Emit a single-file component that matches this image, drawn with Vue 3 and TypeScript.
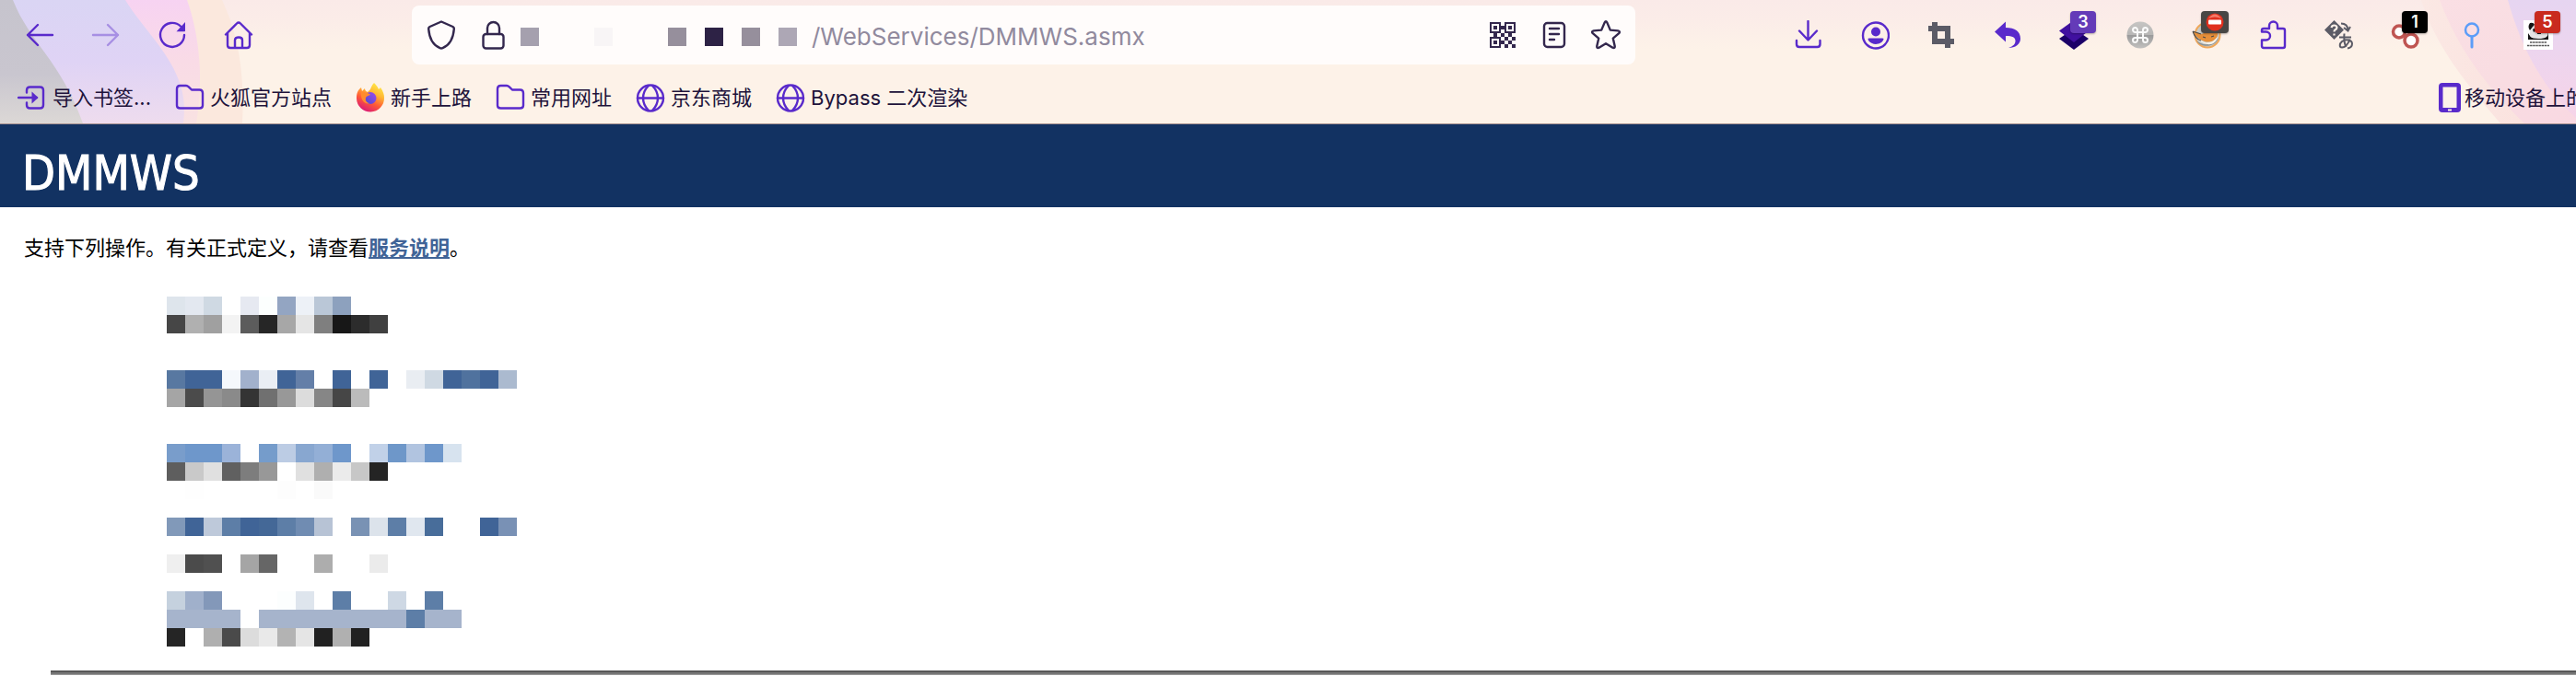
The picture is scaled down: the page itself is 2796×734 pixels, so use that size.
<script setup lang="ts">
import { ref } from 'vue'

type Row = string[]

const address = ref('/WebServices/DMMWS.asmx')

const addressCells: Row = [
  '#a5a0ae', '', '', '', '#f8f5f6', '', '', '', '#968f9c', '', '#2d2245', '', '#968f9c', '', '#ada7b5',
]

interface Bookmark {
  label: string
  icon: 'import' | 'folder' | 'firefox' | 'globe'
}

const bookmarks: Bookmark[] = [
  { label: '导入书签...', icon: 'import' },
  { label: '火狐官方站点', icon: 'folder' },
  { label: '新手上路', icon: 'firefox' },
  { label: '常用网址', icon: 'folder' },
  { label: '京东商城', icon: 'globe' },
  { label: 'Bypass 二次渲染', icon: 'globe' },
]

const A = '#a6b4cc'

/* Colour cells for each obscured operation entry, one array per line. */
const operations: Row[][] = [
  [
    ['#dee5ec', '#e3e8f0', '#cfd9e3', '', '#e6e9f1', '#fcfffe', '#93a5c2', '#edf1f7', '#bac7d7', '#8da1be'],
    ['#464646', '#b0b0b0', '#a0a0a0', '#f3f3f3', '#5c5c5c', '#262626', '#a7a7a7', '#e5e5e5', '#7f7f7f', '#171717', '#2c2c2c', '#404040'],
    [],
    [],
  ],
  [
    ['#5878a1', '#406497', '#406497', '#f5f8fc', '#a2b1cc', '#eaeef4', '#406497', '#647fa8', '', '#406497', '', '#406497', '', '#e9edf2', '#cfd9e3', '#406497', '#50729e', '#406497', '#abbacf'],
    ['#a5a5a5', '#4b4b4b', '#959595', '#8a8a8a', '#343434', '#707070', '#989898', '#dcdcdc', '#868686', '#464646', '#bbbbbb'],
    [],
    [],
  ],
  [
    ['#799dcb', '#6e97cb', '#6e97cb', '#9bb3d9', '', '#759ccb', '#bccce4', '#88a7d0', '#93afd6', '#6e97cb', '', '#c1d1e8', '#6e97c9', '#b1c4e0', '#6e97cb', '#d7e3ef'],
    ['#5e5e5e', '#c9c9c9', '#e0e0e0', '#606060', '#7d7d7d', '#989898', '', '#e0e0e0', '#afafaf', '#ebebeb', '#c7c7c7', '#242424'],
    ['', '#fefefe', '', '', '', '', '#fdfdfd', '', '#fafafa'],
    [],
  ],
  [
    ['#8199b9', '#406497', '#bec9da', '#5d7ea7', '#406497', '#446897', '#5d7ea7', '#708cb2', '#b7c3d5', '', '#7992b4', '#dce3eb', '#5d7ea7', '#e0e7ef', '#486d9a', '', '', '#406497', '#7991b5'],
    [],
    ['#efefef', '#4b4b4b', '#505050', '', '#a5a5a5', '#666666', '', '', '#adadad', '', '', '#ebebeb'],
    [],
  ],
  [
    ['#c5d1de', '#a0b0cb', '#8398b9', '', '', '', '#fcfefe', '#dee5ed', '', '#5d7ea7', '', '', '#ced8e4', '', '#5d7ea7'],
    [A, A, A, A, '', A, A, A, A, A, A, A, A, '#5d7ea7', A, A],
    ['#252525', '', '#afafaf', '#4a4a4a', '#dcdcdc', '#e9e9e9', '#b3b3b3', '#e5e5e5', '#212121', '#b0b0b0', '#212121'],
  ],
]

const qrDark: string[] = [
  'XXXXXX..XXXXXX',
  'X....X..X....X',
  'X.XX.XXXX.XX.X',
  'X.XX.XXXX.XX.X',
  'X....X..X....X',
  'XXXXXX..XXXXXX',
  '..XX..XX..XX..',
  '..XX..XX..XX..',
  'XXXXXX..XX..XX',
  'X....X..XX..XX',
  'X.XX.XXX..XX..',
  'X.XX.XXX..XX..',
  'X....X..XX..XX',
  'XXXXXX..XX..XX',
]
const qrPath = qrDark
  .flatMap((line, y) => [...line].map((c, x) => (c === 'X' ? `M${2 + x * 2} ${2 + y * 2}h2v2h-2z` : '')))
  .join('')
</script>

<template>
  <div class="window">
    <header class="chrome">
      <svg class="swoosh left" viewBox="0 0 300 134" aria-hidden="true">
        <defs>
          <linearGradient id="lav" x1="0" y1="0" x2="0" y2="1">
            <stop offset="0" stop-color="#dad5f4" /><stop offset=".5" stop-color="#dfd3f5" /><stop offset="1" stop-color="#eedcee" />
          </linearGradient>
          <linearGradient id="pink" x1="0" y1="0" x2="0" y2="1">
            <stop offset="0" stop-color="#f7d3f2" /><stop offset=".5" stop-color="#f9dbe6" /><stop offset="1" stop-color="#f9e2e2" />
          </linearGradient>
          <linearGradient id="grey" x1="0" y1="0" x2="0" y2="1">
            <stop offset="0" stop-color="#c6c4cd" /><stop offset=".6" stop-color="#c9c6cf" /><stop offset="1" stop-color="#dcd8d6" />
          </linearGradient>
        </defs>
        <path fill="#fbe8dd" d="M0 0H241C256 32 266 72 263 134H0z" />
        <path fill="url(#pink)" d="M0 0H203C217 40 221 88 213 134H0z" />
        <path fill="url(#lav)" d="M0 0H136C162 42 208 76 199 134H0z" />
        <path fill="url(#grey)" d="M0 0H14C32 46 66 66 90 134H0z" />
      </svg>
      <svg class="swoosh right" viewBox="0 0 206 134" aria-hidden="true">
        <defs>
          <linearGradient id="ro" x1="0" y1="0" x2="1" y2="0">
            <stop offset="0" stop-color="#fbe8e4" /><stop offset="1" stop-color="#fae0dc" />
          </linearGradient>
          <linearGradient id="rp" x1="0" y1="0" x2="1" y2="1">
            <stop offset="0" stop-color="#fadfe4" /><stop offset=".5" stop-color="#f9dde2" /><stop offset="1" stop-color="#f9d8e2" />
          </linearGradient>
          <linearGradient id="rl" x1="0" y1="0" x2="0" y2="1">
            <stop offset="0" stop-color="#e6d5f1" /><stop offset=".45" stop-color="#edd5ee" /><stop offset="1" stop-color="#f6d4e8" />
          </linearGradient>
        </defs>
        <path fill="url(#ro)" d="M38 0C55 54 90 94 124 134H206V0z" />
        <path fill="url(#rp)" d="M58 0C78 54 112 98 150 134H206V0z" />
        <path fill="url(#rl)" d="M132 0C145 46 166 92 206 128V0z" />
      </svg>

      <div class="nav">
        <button class="tool" type="button" aria-label="后退">
          <svg viewBox="0 0 32 32"><path class="line" d="M30 16H3M14 5L3 16l11 11" /></svg>
        </button>
        <button class="tool dim" type="button" aria-label="前进">
          <svg viewBox="0 0 32 32"><path class="line" d="M2 16h27M18 5l11 11-11 11" /></svg>
        </button>
        <button class="tool" type="button" aria-label="刷新">
          <svg viewBox="0 0 32 32"><path class="line" d="M29 16A13 13 0 1 1 25 6.500" /><path fill="currentColor" d="M30 2v9.500a.8.8 0 0 1-.8.8H20.500z" /></svg>
        </button>
        <button class="tool" type="button" aria-label="主页">
          <svg viewBox="0 0 32 32"><path class="line" d="M2 15.500L14 3.500q2-2 4 0l12 12M4 14v13q0 3 3 3h18q3 0 3-3V14M12 30v-8.500q0-3 4-3t4 3V30" /></svg>
        </button>

        <div class="field">
          <button class="tool mini" type="button" aria-label="跟踪保护">
            <svg viewBox="0 0 32 32"><path class="line" d="M16 1.500L28.500 7q1.500.8 1.300 2.500C29 20 25 27 17.500 30.200q-1.500.7-3 0C7 27 3 20 2.200 9.500Q2 7.800 3.500 7z" /></svg>
          </button>
          <button class="tool mini" type="button" aria-label="网站信息">
            <svg viewBox="0 0 32 32"><rect class="line" x="5.500" y="15" width="22" height="15.500" rx="3" /><path class="line" d="M10 15V8.500a6.500 6.500 0 0 1 13 0V15" /></svg>
          </button>
          <div class="cells address-cells" aria-hidden="true">
            <i v-for="(c, i) in addressCells" :key="i" :style="{ background: c || 'transparent' }"></i>
          </div>
          <input v-model="address" class="address" type="text" aria-label="地址" spellcheck="false" />
          <button class="tool mini" type="button" aria-label="二维码">
            <svg viewBox="0 0 32 32"><path fill="currentColor" shape-rendering="crispEdges" :d="qrPath" /></svg>
          </button>
          <button class="tool mini" type="button" aria-label="阅读模式">
            <svg viewBox="0 0 32 32"><rect class="line" x="5" y="3" width="22" height="26" rx="3.500" /><path class="line" d="M11 9h10M11 15h10M11 21h5" /></svg>
          </button>
          <button class="tool mini" type="button" aria-label="收藏">
            <svg viewBox="0 0 32 32"><path class="line" d="M14.600 2.600q1.400-2.600 2.800 0l3.400 8 8.400.8q2.900.6 1 2.700l-6.400 5.600 1.900 8.300q.3 2.900-2.300 1.700L16 25.200l-7.400 4.500q-2.600 1.200-2.300-1.700l1.900-8.300-6.400-5.600q-1.900-2.100 1-2.700l8.400-.8z" /></svg>
          </button>
        </div>

        <button class="tool" type="button" aria-label="下载">
          <svg viewBox="0 0 32 32"><path class="line" d="M15.500 1v20M6 11.500l9.500 10 9.500-10M3 22v4q0 3 3 3h19.500q3 0 3-3v-4" /></svg>
        </button>
        <button class="tool" type="button" aria-label="账户">
          <svg viewBox="0 0 32 32"><circle class="line" cx="17" cy="16.500" r="14" /><circle cx="17" cy="12.500" r="5" fill="currentColor" /><path fill="currentColor" d="M10 19.500h14q2 0 1.400 1.600C23 27.500 11 27.500 8.600 21.100Q8 19.500 10 19.500z" /></svg>
        </button>
        <button class="tool slate" type="button" aria-label="截图">
          <svg viewBox="0 0 32 32"><path fill="currentColor" fill-rule="evenodd" d="M6 2h6v4h14v14h4v6h-4v4h-6v-4H6V12H2V6h4zM12 12v8h8v-8z" /></svg>
        </button>
        <button class="tool" type="button" aria-label="撤销">
          <svg viewBox="0 0 32 32"><path fill="currentColor" d="M2 12.500L14 1.500V8C24 8 30 12 30 20c0 6-5.500 10-13 10 5.500-2 7.500-4.500 7.500-7.500 0-4-3-5.500-10.500-5.500v6.500z" /></svg>
        </button>
        <button class="tool" type="button" aria-label="图层，3">
          <svg viewBox="0 0 32 32"><path fill="#1b0068" d="M0 20L16 9l16 11-16 12z" /><path fill="#4010a0" d="M0 11.500L16 0l16 11.500L16 24z" /></svg>
          <span class="badge violet">3</span>
        </button>
        <button class="tool" type="button" aria-label="快捷命令">
          <svg viewBox="0 0 32 32">
            <defs><linearGradient id="cmd" x1="0" y1="0" x2="0" y2="1"><stop offset="0" stop-color="#c6c5c3" /><stop offset=".49" stop-color="#b8b7b6" /><stop offset=".5" stop-color="#9a9a9a" /><stop offset="1" stop-color="#c2c1bf" /></linearGradient></defs>
            <circle cx="16" cy="16" r="14.500" fill="url(#cmd)" />
            <path fill="none" stroke="#fafafa" stroke-width="2" d="M13 13h6v6H13zM13 13h-2.500a2.500 2.500 0 1 1 2.500-2.500zM19 13v-2.500a2.500 2.500 0 1 1 2.500 2.500zM19 19h2.500a2.500 2.500 0 1 1-2.500 2.500zM13 19v2.500A2.500 2.500 0 1 1 10.500 19z" />
          </svg>
        </button>
        <button class="tool" type="button" aria-label="代理，已停用">
          <svg viewBox="0 0 32 32">
            <circle cx="17" cy="16" r="13.500" fill="#c9ccca" stroke="#efa75a" stroke-width="2" />
            <path fill="#8a8f90" d="M5 22c6 6 18 6 24-3-2 9-18 13-24 3z" />
            <path fill="#e6903a" d="M1 12l10 3 6-3 12-6-1 10c-1 6-8 9-14 7C9 21 5 19 1 12z" />
            <path fill="#f6f1e8" d="M4 18c5 2 8 7 14 6 4 0 7-3 10-6-1 6-6 9-11 8S7 22 4 18z" />
            <path fill="none" stroke="#4c4a48" stroke-width="1.200" d="M1 12c2 6 5 9 9 10M1 12l9 3M12 18l3 1M21 18l3-1" />
          </svg>
          <span class="badge charcoal"><svg viewBox="0 0 20 20"><circle cx="10" cy="10" r="9.500" fill="#e0301e" /><path fill="#f47a68" d="M3 6q7-9 14 0-7-3-14 0z" /><rect x="3" y="7.500" width="14" height="5" rx="1" fill="#fff" /></svg></span>
        </button>
        <button class="tool" type="button" aria-label="扩展">
          <svg viewBox="0 0 32 32"><path class="line" d="M6 30q-2 0-2-2v-6.500h4.500a4.500 4.500 0 0 0 0-9H4V11q0-2 2-2h6V6a4.500 4.500 0 0 1 9 0v3h6q2 0 2 2v17q0 2-2 2z" /></svg>
        </button>
        <button class="tool slate" type="button" aria-label="翻译">
          <svg viewBox="0 0 32 32">
            <path fill="currentColor" d="M0 10.500L10.500 0 21 10.500 10.500 21z" />
            <path fill="none" stroke="#fdf0e8" stroke-width="2.200" d="M7.500 8q.5-2.500 3-2.500t3 2.200q0 1.600-1.800 2.500-1.200.6-1.200 2.300M10.500 14.500v2" />
            <path fill="none" stroke="currentColor" stroke-width="2" d="M18 3.500q7 0 7.500 7M21 8l4.500 3.500L28 7" />
            <path fill="none" stroke="currentColor" stroke-width="2" d="M16 18.500h13M21.500 14.500c-.5 6 0 11 2 14.500M27.500 20.500c-1.500 5-5 9-8.500 9-3 0-3-4 0-6.500 4-3 11-2 11 2.500 0 3-2 4.500-5 5" />
          </svg>
        </button>
        <button class="tool" type="button" aria-label="链接，1">
          <svg viewBox="0 0 32 32"><circle cx="9" cy="12.500" r="6.500" fill="#fff" stroke="#bf5552" stroke-width="3.500" /><circle cx="22" cy="22" r="7" fill="#fff" stroke="#bf5552" stroke-width="3.500" /></svg>
          <span class="badge black">1</span>
        </button>
        <button class="tool sky" type="button" aria-label="定位">
          <svg viewBox="0 0 32 32"><circle cx="16" cy="10.500" r="7" fill="none" stroke="currentColor" stroke-width="2.500" /><path stroke="currentColor" stroke-width="3" stroke-linecap="round" d="M16 18v11" /></svg>
        </button>
        <button class="tool" type="button" aria-label="熊猫，5">
          <svg viewBox="0 0 32 32">
            <path fill="#fff" d="M0 0h32v32H0z" />
            <path fill="#141414" d="M5 21V14q3 5 5 5h10q4 0 7-6v8zM7 3q4-1 5 2l-5 6q-3-4 0-8z" />
            <path fill="#e4e4e4" d="M8 10q3-6 9-6t9 8-10 8-8-10z" />
            <path fill="#141414" d="M10 10l3-2 1 3-3 2zM15 13h4v2h-4z" />
            <path stroke="#555" stroke-width="1.500" stroke-dasharray="2.500 .6" d="M7 24h18M4 27.500h24" />
          </svg>
          <span class="badge red">5</span>
        </button>
      </div>

      <nav class="bookmarks" aria-label="书签">
        <a v-for="b in bookmarks" :key="b.label" class="bookmark" href="#">
          <svg v-if="b.icon === 'import'" viewBox="0 0 32 32"><path class="line" d="M1 16h20M10 10.500V8q0-3.500 3.500-3.500h11q3.500 0 3.500 3.500v16q0 3.500-3.500 3.500h-11q-3.500 0-3.500-3.500v-2.500" /><path fill="currentColor" d="M15.500 9.500l7 6.500-7 6.500z" /></svg>
          <svg v-else-if="b.icon === 'folder'" viewBox="0 0 32 32"><path class="line" d="M2 24.500V6.500q0-3.500 3.500-3.500h6.500q1.500 0 2.600 1.200L18 7.500h8.500q3.500 0 3.500 3.500v13.500q0 3-3.500 3h-21q-3.500 0-3.500-3z" /></svg>
          <svg v-else-if="b.icon === 'globe'" viewBox="0 0 32 32"><circle class="line" cx="16" cy="16.500" r="14" /><path class="line" d="M2 16.500h28M14 3c-8 8-8 19 0 27M18 3c8 8 8 19 0 27" /></svg>
          <svg v-else viewBox="0 0 32 32">
            <defs>
              <linearGradient id="ff" x1=".8" y1="0" x2=".3" y2="1"><stop offset="0" stop-color="#fff04a" /><stop offset=".35" stop-color="#ffb733" /><stop offset=".65" stop-color="#ff5a36" /><stop offset="1" stop-color="#d9177a" /></linearGradient>
              <linearGradient id="ffg" x1="1" y1="0" x2="0" y2="1"><stop offset="0" stop-color="#a04bea" /><stop offset="1" stop-color="#4a4ad0" /></linearGradient>
            </defs>
            <path fill="url(#ff)" d="M20 0c2 2 4 4 5 7l2-2c3 4 4 8 4 11a15 15 0 0 1-30 1C1 12 2 8 6 5l1 4 3-3c0 2 1 3 3 4l3-3c1-3 2-5 4-7z" />
            <circle cx="16" cy="16.500" r="6.500" fill="url(#ffg)" />
            <path fill="#ff8b2e" d="M6 10c4 0 9 1 10 3-2 1-4 1-5 3-1 4 2 6 5 6-6 2-11-3-10-12z" />
          </svg>
          <span>{{ b.label }}</span>
        </a>
        <a class="bookmark mobile" href="#">
          <svg viewBox="0 0 24 32"><path fill="currentColor" fill-rule="evenodd" d="M4 0h16q4 0 4 4v24q0 4-4 4H4q-4 0-4-4V4q0-4 4-4zM4.500 4.500v22.500h15V4.500zM10 28.500v2h4v-2z" /></svg>
          <span>移动设备上的</span>
        </a>
      </nav>
    </header>

    <div class="banner"><h1>DMMWS</h1></div>

    <main>
      <p>支持下列操作。有关正式定义，请查看<a href="#">服务说明</a>。</p>
      <ul class="operations">
        <li v-for="(op, i) in operations" :key="i">
          <div v-for="(row, j) in op" :key="j" class="cells">
            <i v-for="(c, k) in row" :key="k" :style="{ background: c || 'transparent' }"></i>
          </div>
        </li>
      </ul>
      <hr />
    </main>
  </div>
</template>

<style>
body {
  margin: 0;
  background: #fff;
}
</style>

<style scoped>
.window {
  font-family: Inter, 'Noto Sans CJK SC', sans-serif;
  overflow: hidden;
}
.chrome {
  position: relative;
  background: linear-gradient(#faeae8 0, #fbece8 20px, #fdf2e8 54px);
  border-bottom: 1px solid #a48f8e;
  color: #20123a;
}
.swoosh {
  position: absolute;
  top: 0;
  height: 100%;
}
.swoosh.left {
  left: 0;
}
.swoosh.right {
  right: 0;
}
.nav {
  position: relative;
  display: flex;
  align-items: center;
  height: 76px;
  padding: 0 5px 0 7px;
}
.tool {
  position: relative;
  display: flex;
  flex: none;
  align-items: center;
  justify-content: center;
  width: 72px;
  height: 64px;
  padding: 0;
  border: 0;
  background: none;
  color: #592acb;
  font: inherit;
}
.tool > svg {
  width: 32px;
  height: 32px;
}
.line {
  fill: none;
  stroke: currentColor;
  stroke-width: 2.4;
  stroke-linecap: round;
  stroke-linejoin: round;
}
.tool.dim {
  opacity: 0.4;
}
.tool.slate {
  color: #5b5b66;
}
.tool.sky {
  color: #5c9df8;
}
.tool.mini {
  width: 56px;
  color: #33274d;
}
.badge {
  position: absolute;
  top: 6px;
  right: 12px;
  display: flex;
  align-items: center;
  justify-content: center;
  box-sizing: border-box;
  min-width: 28px;
  height: 24px;
  border-radius: 4px;
  color: #fff;
  font-size: 18px;
  font-weight: 600;
  line-height: 24px;
  box-shadow: 0 1px 2px rgba(0, 0, 0, 0.3);
}
.badge svg {
  width: 20px;
  height: 20px;
}
.violet {
  background: #643bb8;
}
.charcoal {
  min-width: 30px;
  background: #484644;
}
.black {
  background: #000;
}
.red {
  background: #c92a1e;
}
.field {
  display: flex;
  flex: 1;
  align-items: center;
  height: 64px;
  margin: 0 152px;
  padding: 0 4px;
  box-sizing: border-box;
  border-radius: 8px;
  background: #fffcfb;
}
.cells {
  display: flex;
  height: 20px;
}
.cells i {
  flex: none;
  width: 20px;
  height: 20px;
}
.address-cells {
  margin-left: 2px;
  padding-top: 4px;
}
.address {
  flex: 1;
  min-width: 0;
  height: 40px;
  margin-left: 16px;
  padding: 2px 0 0;
  box-sizing: border-box;
  border: 0;
  outline: 0;
  background: none;
  color: #918a9e;
  font: 400 26px/38px Inter, 'Noto Sans CJK SC', sans-serif;
}
.bookmarks {
  position: relative;
  display: flex;
  align-items: center;
  gap: 26px;
  height: 58px;
  box-sizing: border-box;
  padding: 2px 0 0 19px;
}
.bookmark {
  display: flex;
  flex: none;
  align-items: center;
  gap: 6px;
  color: #20123a;
  font-size: 22px;
  line-height: 32px;
  text-decoration: none;
  white-space: nowrap;
}
.bookmark svg {
  width: 32px;
  height: 32px;
  color: #592acb;
}
.bookmark.mobile {
  gap: 4px;
  width: 149px;
  margin-left: auto;
}
.bookmark.mobile svg {
  flex: none;
  width: 24px;
}
.banner {
  padding: 25px 24px 9px;
  background: #123262;
}
h1 {
  margin: 0;
  color: #fff;
  font: 400 52px/56px 'DejaVu Sans Condensed', 'DejaVu Sans', sans-serif;
  -webkit-text-stroke: 1px #fff;
}
main {
  padding-top: 28px;
}
p {
  margin: 0 0 41px;
  padding-left: 26px;
  color: #000;
  font: 400 22px/28px 'Noto Sans CJK SC', sans-serif;
}
p a {
  color: #406497;
  font-weight: 700;
}
.operations {
  margin: 0 0 26px 181px;
  padding: 0;
  list-style: none;
}
hr {
  height: 2px;
  margin: 0 0 0 55px;
  border: 0;
  border-top: 2px solid #585858;
  border-bottom: 1px solid #999;
  background: #777;
}
</style>
